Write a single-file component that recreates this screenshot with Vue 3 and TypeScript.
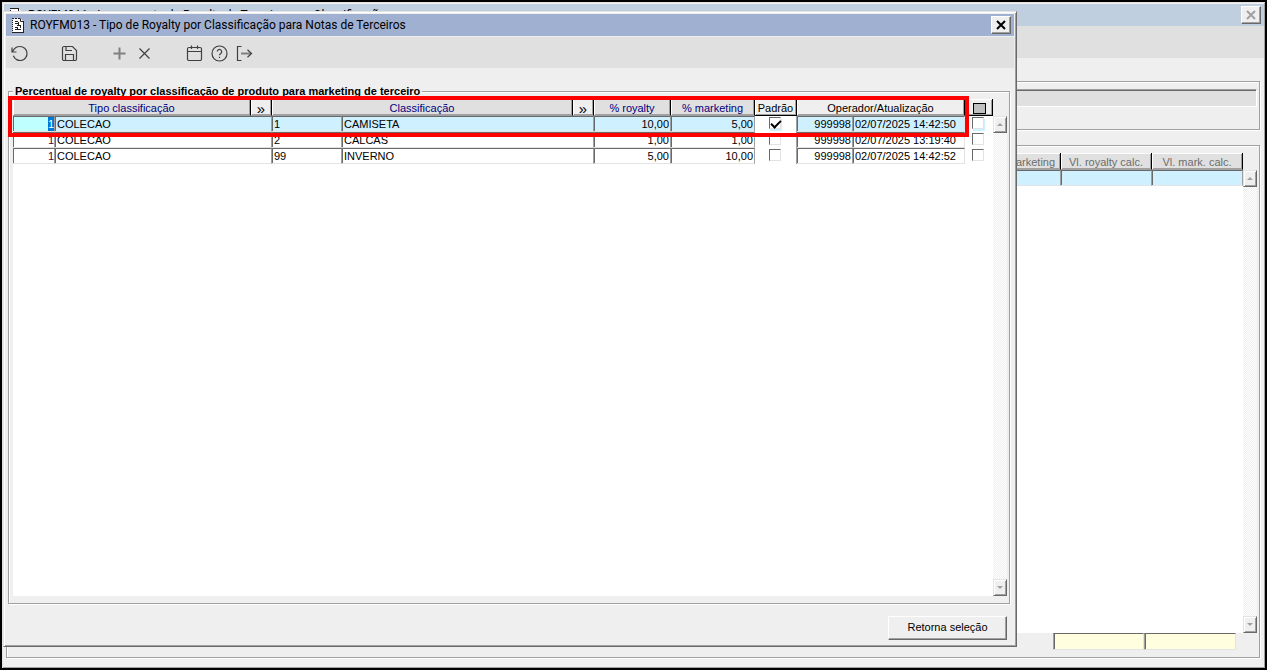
<script setup lang="ts">
import { onMounted, ref } from 'vue'

interface Row {
  tipo: string
  tipoDesc: string
  codigo: string
  classificacao: string
  royalty: string
  marketing: string
  padrao: boolean
  operador: string
  atualizacao: string
  marcado: boolean
}

const rows = ref<Row[]>([
  { tipo: '1', tipoDesc: 'COLECAO', codigo: '1', classificacao: 'CAMISETA', royalty: '10,00', marketing: '5,00', padrao: true, operador: '999998', atualizacao: '02/07/2025 14:42:50', marcado: false },
  { tipo: '1', tipoDesc: 'COLECAO', codigo: '2', classificacao: 'CALCAS', royalty: '1,00', marketing: '1,00', padrao: false, operador: '999998', atualizacao: '02/07/2025 13:19:40', marcado: false },
  { tipo: '1', tipoDesc: 'COLECAO', codigo: '99', classificacao: 'INVERNO', royalty: '5,00', marketing: '10,00', padrao: false, operador: '999998', atualizacao: '02/07/2025 14:42:52', marcado: false },
])

type TextKey = 'tipo' | 'tipoDesc' | 'codigo' | 'classificacao' | 'royalty' | 'marketing'
const fields: { key: TextKey; label: string; span: number; right: boolean }[] = [
  { key: 'tipo', label: 'Tipo classificação', span: 1, right: true },
  { key: 'tipoDesc', label: 'Descrição do tipo', span: 2, right: false },
  { key: 'codigo', label: 'Código', span: 1, right: false },
  { key: 'classificacao', label: 'Classificação', span: 2, right: false },
  { key: 'royalty', label: '% royalty', span: 1, right: true },
  { key: 'marketing', label: '% marketing', span: 1, right: true },
]

const grid = ref<HTMLTableElement | null>(null)

onMounted(() => {
  const first = grid.value?.querySelector<HTMLInputElement>('tbody input')
  first?.focus()
  first?.select()
})
</script>

<template>
  <main class="desktop">
    <section class="window" aria-label="ROYFM011">
      <header class="title inactive">
        <svg class="doc" viewBox="0 0 12 15" aria-hidden="true">
          <path d="M.5.5h8l3 3v11H.5z" fill="#fff" />
          <path d="M.5 0v15" stroke="#222" stroke-dasharray="1 1" />
          <path d="M0 .5h9M8.500.5v3h3M11.500 3v12M0 14.500h12M3 3.500h3M3 5.500h5M5 7.500h4" stroke="#222" fill="none" />
        </svg>
        <span>ROYFM011 - Lançamento de Royalty de Terceiros por Classificação</span>
        <button class="close" type="button" aria-label="Fechar" disabled>
          <svg viewBox="0 0 10 10"><path d="M1 1l8 8M9 1l-8 8" stroke="#a0a0a0" stroke-width="2" /></svg>
        </button>
      </header>
      <div class="back-tools"></div>
      <div class="group back-filter"><div class="back-field"></div></div>
      <div class="group back-grid">
        <div class="list">
          <div class="sheet">
            <table class="back-table">
              <colgroup><col /><col class="w72" /><col class="w91" /><col class="w91" /></colgroup>
              <thead>
                <tr><th></th><th>% marketing</th><th>Vl. royalty calc.</th><th>Vl. mark. calc.</th></tr>
              </thead>
              <tbody>
                <tr class="current"><td></td><td></td><td></td><td></td></tr>
              </tbody>
            </table>
          </div>
          <div class="scroll">
            <button type="button" aria-label="Rolar para cima"><i class="up"></i></button>
            <button type="button" aria-label="Rolar para baixo"><i class="down"></i></button>
          </div>
        </div>
        <div class="totals">
          <input type="text" readonly aria-label="Total royalty" />
          <input type="text" readonly aria-label="Total marketing" />
        </div>
      </div>
    </section>

    <section class="dialog" role="dialog" aria-labelledby="dialog-title">
      <header class="title">
        <svg class="doc" viewBox="0 0 12 15" aria-hidden="true">
          <path d="M.5.5h8l3 3v11H.5z" fill="#fff" />
          <path d="M.5 0v15" stroke="#222" stroke-dasharray="1 1" />
          <path d="M0 .5h9" stroke="#222" stroke-dasharray="2 1" />
          <path d="M8.500.5v3h3M11.500 3v12M0 14.500h12M3 3.500h3M3 5.500h3M5 7.500h4M3 9.500h3M3 11.500h6M6.500 4v3M5.500 9v3M8.500 8v2" stroke="#222" fill="none" />
        </svg>
        <span id="dialog-title">ROYFM013 - Tipo de Royalty por Classificação para Notas de Terceiros</span>
        <button class="close" type="button" aria-label="Fechar">
          <svg viewBox="0 0 10 10"><path d="M1 1l8 8M9 1l-8 8" stroke="#000" stroke-width="2" /></svg>
        </button>
      </header>

      <nav class="toolbar" aria-label="Ferramentas">
        <button type="button" aria-label="Desfazer">
          <svg viewBox="0 0 17 17"><path d="M1 2.500v4.500h4.500M1.500 6.500C3 3.500 5.500 1.500 9 1.500a7 7 0 1 1-6.600 9.300" /></svg>
        </button>
        <span></span>
        <button type="button" aria-label="Salvar">
          <svg viewBox="0 0 17 17"><path d="M3 1.500h8.500l4 4V14a1.500 1.500 0 0 1-1.500 1.500H3A1.500 1.500 0 0 1 1.500 14V3A1.500 1.500 0 0 1 3 1.500zM4.500 15.500v-6h8v6M5 1.500v4h6" /></svg>
        </button>
        <span></span>
        <button type="button" aria-label="Adicionar">
          <svg viewBox="0 0 17 17"><path class="soft" d="M8.500 2.500v12M2.500 8.500h12" /></svg>
        </button>
        <button type="button" aria-label="Excluir">
          <svg viewBox="0 0 17 17"><path d="M3.500 3.500l10 10M13.500 3.500l-10 10" /></svg>
        </button>
        <span></span>
        <button type="button" aria-label="Calendário">
          <svg viewBox="0 0 17 17"><path d="M3 2.500h11A1.500 1.500 0 0 1 15.500 4v10a1.500 1.500 0 0 1-1.500 1.500H3A1.500 1.500 0 0 1 1.500 14V4A1.500 1.500 0 0 1 3 2.500zM1.500 6.500h14M5.500.5v3.500M11.500.5v3.500" /></svg>
        </button>
        <button type="button" aria-label="Ajuda">
          <svg viewBox="0 0 17 17"><circle cx="8.500" cy="8.500" r="7.500" /><path d="M6.300 6.600a2.200 2.200 0 1 1 3.500 1.800c-.8.5-1.300.9-1.300 1.800M8.500 11.800v1.200" /></svg>
        </button>
        <button type="button" aria-label="Sair">
          <svg viewBox="0 0 17 17"><path d="M5.500 1.500h-4v14h4" /><path class="soft" d="M5 8.500h10" /><path d="M11.500 4.800l4 3.700-4 3.700" /></svg>
        </button>
      </nav>

      <div class="group main-group">
        <h2>Percentual de royalty por classificação de produto para marketing de terceiro</h2>
        <div class="list">
          <div class="sheet">
            <table ref="grid">
              <colgroup>
                <col class="w42" /><col class="w196" /><col class="w21" /><col class="w70" /><col /><col class="w21" />
                <col class="w77" /><col class="w84" /><col class="w42" /><col class="w56" /><col class="w112" /><col class="w28" />
              </colgroup>
              <thead>
                <tr>
                  <th colspan="2" class="blue">Tipo classificação</th>
                  <th class="light"><button type="button" aria-label="Buscar tipo">»</button></th>
                  <th colspan="2" class="blue">Classificação</th>
                  <th class="light"><button type="button" aria-label="Buscar classificação">»</button></th>
                  <th class="blue">% royalty</th>
                  <th class="blue">% marketing</th>
                  <th class="light raised">Padrão</th>
                  <th colspan="2" class="light">Operador/Atualização</th>
                  <th class="light raised mark"><button type="button" aria-label="Marcar todos"><i></i></button></th>
                </tr>
              </thead>
              <tbody>
                <tr v-for="(row, i) in rows" :key="i" :class="{ current: i === 0 }">
                  <td v-for="f in fields" :key="f.key" :colspan="f.span">
                    <input v-model="row[f.key]" type="text" :class="{ right: f.right, code: f.key === 'tipo' }" :aria-label="f.label" />
                  </td>
                  <td class="tick center"><input v-model="row.padrao" type="checkbox" aria-label="Padrão" /></td>
                  <td><input v-model="row.operador" type="text" class="right" readonly aria-label="Operador" /></td>
                  <td class="last"><input v-model="row.atualizacao" type="text" readonly aria-label="Atualização" /></td>
                  <td class="tick"><input v-model="row.marcado" type="checkbox" aria-label="Marcar linha" /></td>
                </tr>
              </tbody>
            </table>
            <div class="highlight"></div>
          </div>
          <div class="scroll">
            <button type="button" aria-label="Rolar para cima"><i class="up"></i></button>
            <button type="button" aria-label="Rolar para baixo"><i class="down"></i></button>
          </div>
        </div>
      </div>

      <footer><button class="return" type="button">Retorna seleção</button></footer>
    </section>
  </main>
</template>

<style>
html,
body {
  margin: 0;
  background: #000;
}
</style>

<style scoped>
* {
  box-sizing: border-box;
}
.desktop {
  position: relative;
  height: 100vh;
  border: 2px solid #000;
  background: #efefef;
  font: 11px/13px "Liberation Sans", Arial, sans-serif;
  color: #000;
  overflow: hidden;
}
button,
input {
  font: inherit;
  color: inherit;
  margin: 0;
  padding: 0;
  border: 0;
  border-radius: 0;
  outline: 0;
  background: none;
}
.window {
  display: flex;
  flex-direction: column;
  height: 100%;
  padding: 2px 1px 10px 2px;
  box-shadow: inset 1px 1px #e3e3e3, inset -1px -1px #a0a0a0;
}
.title {
  display: flex;
  align-items: center;
  gap: 6px;
  height: 22px;
  padding: 0 3px 0 6px;
  background: #a0b0d0;
  font: 12px/16px Roboto, "Noto Sans", sans-serif;
}
.title.inactive {
  background: #c0cfe0;
}
.doc {
  width: 12px;
  height: 15px;
  flex: none;
}
.close {
  display: grid;
  place-items: center;
  width: 20px;
  height: 18px;
  margin-left: auto;
  background: #efefef;
  border: 1px solid;
  border-color: #fff #696969 #696969 #fff;
  box-shadow: inset -1px -1px #a0a0a0;
}
.close svg {
  width: 10px;
  height: 10px;
}
.back-tools {
  height: 32px;
  background: #e0e0e0;
}
.group {
  border: 1px solid #a0a0a0;
  box-shadow: 1px 1px #fff, inset 1px 1px #fff;
}
.back-filter {
  height: 49px;
  margin: 23px 4px 0 2px;
  padding: 7px 2px;
}
.back-field {
  height: 18px;
  background: #e0e0e0;
  border: 1px solid;
  border-color: #a0a0a0 #fff #fff #a0a0a0;
  box-shadow: inset 1px 1px #696969;
}
.back-grid {
  display: flex;
  flex-direction: column;
  flex: 1;
  margin: 15px 4px 0 2px;
  padding: 7px 2px 7px 4px;
}
.list {
  display: flex;
  flex: 1;
  min-height: 0;
}
.sheet {
  position: relative;
  flex: 1;
  background: #fff;
}
.scroll {
  display: flex;
  flex-direction: column;
  justify-content: space-between;
  width: 14px;
  margin-top: 17px;
  background: repeating-conic-gradient(#fff 0 25%, #efefef 0 50%) 0 0 / 2px 2px;
}
.scroll button {
  display: grid;
  place-items: center;
  height: 17px;
  background: #efefef;
  border: 1px solid;
  border-color: #e3e3e3 #696969 #696969 #e3e3e3;
  box-shadow: inset 1px 1px #fff, inset -1px -1px #a0a0a0;
}
.scroll i {
  border: 3px solid transparent;
}
.scroll .up {
  border-top: 0;
  border-bottom-color: #a0a0a0;
}
.scroll .down {
  border-bottom: 0;
  border-top-color: #a0a0a0;
}
.totals {
  display: grid;
  grid-template-columns: 91px 92px;
  justify-content: end;
  padding-right: 21px;
}
.totals input {
  width: 100%;
  height: 17px;
  background: #ffffe0;
  border: 1px solid;
  border-color: #696969 #e3e3e3 #e3e3e3 #a0a0a0;
  box-shadow: inset 1px 0 #696969;
}

table {
  width: 100%;
  table-layout: fixed;
  border-collapse: separate;
  border-spacing: 0;
}
.w21 { width: 21px; }
.w28 { width: 28px; }
.w42 { width: 42px; }
.w56 { width: 56px; }
.w70 { width: 70px; }
.w72 { width: 72px; }
.w77 { width: 77px; }
.w84 { width: 84px; }
.w91 { width: 91px; }
.w112 { width: 112px; }
.w196 { width: 196px; }
th {
  height: 17px;
  padding: 2px 0 0;
  font-weight: normal;
  text-align: center;
  white-space: nowrap;
  line-height: 13px;
  background: #e0e0e0;
  border-right: 1px solid #000;
  border-bottom: 1px solid #a0a0a0;
  box-shadow: inset 1px 1px #fff, inset -1px -1px #a0a0a0;
}
th.blue {
  color: #000080;
}
th.light {
  background: #efefef;
}
th.raised {
  border-bottom-color: #000;
}
th button {
  display: block;
  width: 100%;
  height: 13px;
  font-size: 15px;
  line-height: 9px;
}
.mark i {
  display: block;
  width: 13px;
  height: 11px;
  margin-left: 8px;
  border: 1px solid #000;
  background: #c0c0c0;
}
.back-table th {
  color: #6d6d6d;
}
td {
  height: 16px;
  padding: 0;
  background: #fff;
  border-right: 1px solid #a0a0a0;
  border-top: 1px solid #696969;
  border-bottom: 1px solid #e3e3e3;
  box-shadow: inset 1px 0 #696969;
}
td.last {
  border-right-color: #e3e3e3;
}
.current td {
  background: #cff0ff;
}
td input[type="text"] {
  display: block;
  width: 100%;
  height: 14px;
  padding: 0 1px 0 2px;
  line-height: 14px;
}
td .right {
  text-align: right;
}
td input[type="text"].code {
  padding-right: 0;
  color: #500040;
}
.current td:first-child {
  background: #c0ffff;
}
td input::selection {
  background: #0078d7;
  color: #fff;
}
td.tick,
.current td.tick {
  padding: 1px 0 0 7px;
  border: 0;
  box-shadow: none;
  background: #fff;
  vertical-align: top;
}
td.tick.center {
  padding-left: 14px;
  border-right: 1px solid #a0a0a0;
}
.tick input {
  display: grid;
  appearance: none;
  width: 12px;
  height: 12px;
  background: #fff;
  border: 1px solid;
  border-color: #696969 #e3e3e3 #e3e3e3 #696969;
}
.current .tick input {
  box-shadow: 1px 2px #cff0ff;
}
.tick input:checked::before {
  content: "";
  width: 8px;
  height: 4px;
  margin: 2px 0 0 1px;
  border: solid #000;
  border-width: 0 0 2px 2px;
  transform: rotate(-45deg);
}
.highlight {
  position: absolute;
  top: -3px;
  left: -5px;
  right: 24px;
  height: 41px;
  border: 4px solid #f00;
  pointer-events: none;
}

.dialog {
  position: absolute;
  top: 9px;
  left: 1px;
  right: 248px;
  bottom: 21px;
  display: flex;
  flex-direction: column;
  padding: 2px;
  background: #efefef;
  border: 1px solid;
  border-color: #e3e3e3 #696969 #696969 #e3e3e3;
  box-shadow: inset 1px 1px #fff, inset -1px -1px #a0a0a0;
}
.toolbar {
  display: flex;
  height: 31px;
  margin-top: 1px;
  padding-left: 1px;
  background: #e0e0e0;
}
.toolbar button,
.toolbar span {
  display: grid;
  place-items: center;
  width: 25px;
}
.toolbar button {
  height: 33px;
}
.toolbar svg {
  width: 17px;
  height: 17px;
  fill: none;
  stroke: #404040;
  stroke-width: 1.2;
}
.toolbar .soft {
  stroke: #808080;
  stroke-width: 2;
}
.main-group {
  display: flex;
  flex-direction: column;
  flex: 1;
  margin: 23px 4px 0 2px;
  padding: 0 2px 7px 4px;
}
h2 {
  align-self: flex-start;
  height: 14px;
  margin: -7px 0 0;
  padding: 0 2px;
  font-size: 11px;
  line-height: 13px;
  background: #efefef;
  white-space: nowrap;
}
footer {
  display: flex;
  justify-content: flex-end;
  padding: 12px 7px 4px;
}
.return {
  width: 119px;
  height: 24px;
  padding-bottom: 2px;
  background: #efefef;
  border: 1px solid;
  border-color: #fff #696969 #696969 #fff;
  box-shadow: inset -1px -1px #a0a0a0;
}
</style>
